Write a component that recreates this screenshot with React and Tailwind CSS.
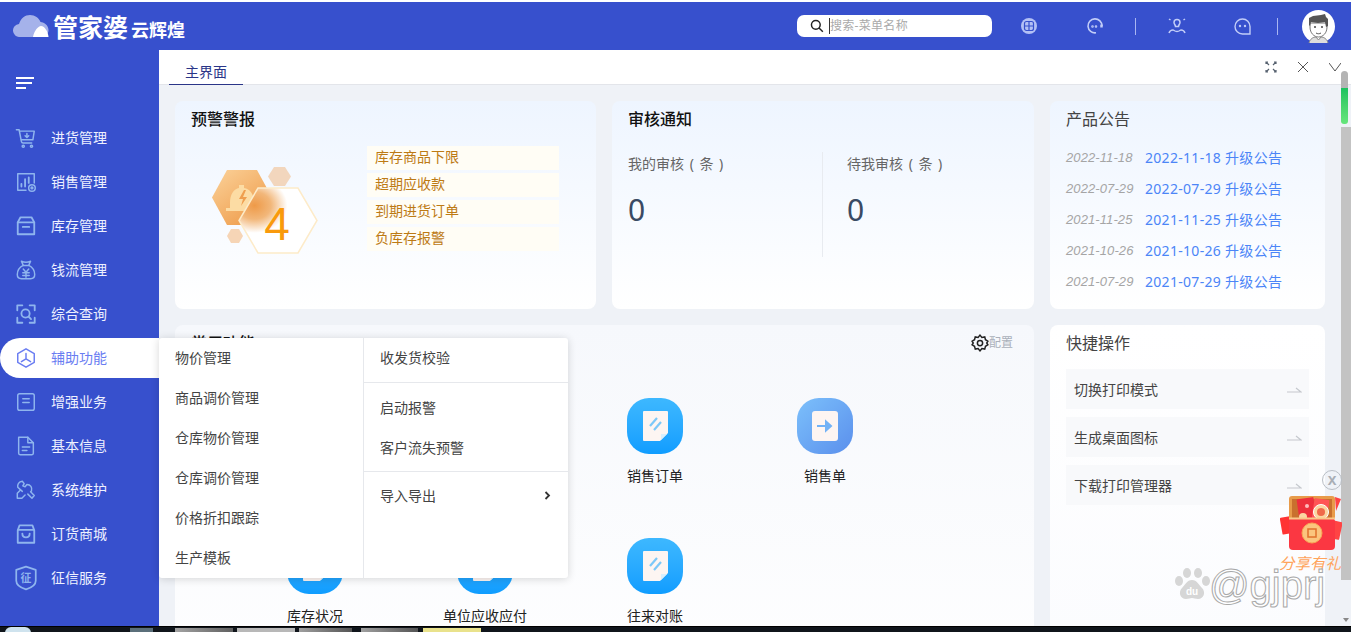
import React from "react";

const S = "#8fb5ee";
const P = ({ children, c = S, size = 22, sw = 1.6 }) => (
  <svg width={size} height={size} viewBox="0 0 24 24" fill="none" stroke={c} strokeWidth={sw} strokeLinecap="round" strokeLinejoin="round">
    {children}
  </svg>
);

const icons = {
  cart: <P><path d="M1.500 3h3l2.500 13c.2 1 .9 1.500 1.800 1.500h9.400" /><path d="M5 4.500h16l-1.500 9.500H7" /><path d="M13 7v4M11 9.500l2 2 2-2" /><circle cx="9" cy="21" r="1.200" /><circle cx="18" cy="21" r="1.200" /></P>,
  chart: <P><path d="M21 13V3H3v18h9" /><path d="M7 17v-3M11 17V9M15 13V7" strokeWidth="2" /><circle cx="18.500" cy="18.500" r="3.600" /><circle cx="18.500" cy="18.500" r="1" /></P>,
  box: <P sw={2}><path d="M3 8l3-5.500h12L21 8v13H3z" /><path d="M3 8h18M8.500 13h7" /></P>,
  money: <P><path d="M9 7L7 2.500c3 1.200 7 1.200 10 0L15 7" /><path d="M9 7C5 9 2.500 13 2.500 17c0 3 2 4.500 4.500 4.500h10c2.500 0 4.500-1.500 4.500-4.500 0-4-2.500-8-6.500-10z" /><path d="M9 11l3 3.500 3-3.500M8.500 15h7M8.500 18h7M12 14.500V20" /></P>,
  scan: <P sw={2}><path d="M2.500 8V2.500H8M16 2.500h5.500V8M21.500 16v5.500H16M8 21.500H2.500V16" /><circle cx="11.500" cy="11.500" r="4.500" /><path d="M15 15l2.500 2.500" /></P>,
  hexa: <P c="#6a7df2"><path d="M12 2l9 5.200v9.600L12 22l-9-5.200V7.200z" /><path d="M12 7v6M12 13l-5 3M12 13l5 3" /></P>,
  form: <P><rect x="3" y="3" width="18" height="18" rx="2" /><path d="M8.500 8.500h7M8.500 12.500h7" /></P>,
  doc: <P><path d="M4 2.500h10l6 6V20a1.500 1.500 0 0 1-1.500 1.500h-13A1.500 1.500 0 0 1 4 20z" /><path d="M14 2.500V8.500h6M8 13h8M8 17h5" /></P>,
  tool: <P><path d="M8 13.500L3 9c-.5-3 1-6 5-6.500L10 5 8.500 7.500 11 8.500l2-2.500c4 0 6 3 5 7l-1 1 4 4-2.500 3-4.500-4.500" /><path d="M6 12l-3.500 3.500V21h5l3.500-3.500" /></P>,
  bag: <P sw={2}><path d="M5 2.500h14l2 5.500v13.500H3V8z" /><path d="M3.500 7.500h17M8 11.500c0 5.500 8 5.500 8 0" /></P>,
  shield: <P size={26}><path d="M12 1.500l9 3v10c0 4-4 6.500-9 8-5-1.500-9-4-9-8v-10z" /><text x="12" y="15.500" fontSize="10" textAnchor="middle" fill={S} stroke="none" fontWeight="700">征</text></P>,
};

const menu = [
  ["进货管理", "cart"], ["销售管理", "chart"], ["库存管理", "box"], ["钱流管理", "money"], ["综合查询", "scan"], ["辅助功能", "hexa", true],
  ["增强业务", "form"], ["基本信息", "doc"], ["系统维护", "tool"], ["订货商城", "bag"], ["征信服务", "shield"],
];

const warn = ["库存商品下限", "超期应收款", "到期进货订单", "负库存报警"];
const notices = ["2022-11-18", "2022-07-29", "2021-11-25", "2021-10-26", "2021-07-29"];
const quick = ["切换打印模式", "生成桌面图标", "下载打印管理器"];
const left = ["物价管理", "商品调价管理", "仓库物价管理", "仓库调价管理", "价格折扣跟踪", "生产模板"];

const Tile = ({ label, arrow }) => (
  <div className="flex w-[170px] h-[140px] flex-col items-center">
    <div className={`w-[56px] h-[56px] rounded-[22px] flex items-center justify-center ${arrow ? "bg-linear-to-br from-[#7cc0fb] to-[#5b8fec]" : "bg-linear-to-b from-[#3db8ff] to-[#0f9dff]"}`}>
      {arrow ? (
        <svg width="26" height="30" viewBox="0 0 26 30">
          <rect width="26" height="30" rx="3" fill="#fdf5f2" />
          <path d="M5 15h13M14 10.500l5 4.500-5 4.500z" stroke="#72b2f6" strokeWidth="2" fill="#72b2f6" />
        </svg>
      ) : (
        <svg width="25" height="30" viewBox="0 0 25 30">
          <path d="M0 1a1 1 0 0 1 1-1h23a1 1 0 0 1 1 1v21l-8 8H1a1 1 0 0 1-1-1z" fill="#fdf5f2" />
          <path d="M7 15l7-8M11 19l7-8" stroke="#7cc8f8" strokeWidth="2.200" />
          <path d="M18 23h6l-6 6z" fill="#d9eefc" />
        </svg>
      )}
    </div>
    <div className="mt-[13px] text-[14px] leading-[18px] text-[#222]">{label}</div>
  </div>
);

const Hex = () => (
  <div className="relative w-[120px] h-[92px] ml-[9px] mt-[37px] shrink-0">
    <svg width="120" height="92" viewBox="0 0 120 92" className="block">
      <defs>
        <linearGradient id="h1" x1="0" y1="0" x2="0.8" y2="1">
          <stop offset="0" stopColor="#fbd29a" />
          <stop offset="1" stopColor="#ee9a48" />
        </linearGradient>
        <radialGradient id="h2" cx="0.2" cy="0.27" r="0.42">
          <stop offset="0" stopColor="#ee9a48" />
          <stop offset="0.5" stopColor="#f2b77a" />
          <stop offset="1" stopColor="#ffffff" />
        </radialGradient>
      </defs>
      <path d="M27 3h30l15 27.500-15 27.500H27L12 30.500z" fill="url(#h1)" />
      <path d="M74 0h11l6 9.500-6 9.500H74l-6-9.500z" fill="#f2d6bd" />
      <path d="M31 62h8l4 7-4 7h-8l-4-7z" fill="#f6d5b6" />
      <path d="M30 36c0-9 4-14 9-15v-3h5v3c6 1 10 6 10 15v5H30zM26 41h32v3H26z" fill="#fcdca4" />
      <path d="M44 23l-5 9h4l-2 7 6-9h-4l3-7z" fill="#ef9f4f" />
      <path d="M58 21h40l19 32.500-19 32.500H58L39 53.500z" fill="url(#h2)" stroke="#fdebc9" strokeWidth="1.500" />
    </svg>
    <div className="absolute left-[50px] top-[29px] w-[54px] text-center text-[46px] leading-[56px] text-[#f99a0c] font-['Liberation_Sans',sans-serif] font-light">4</div>
  </div>
);

const Avatar = () => (
  <svg width="33" height="33" viewBox="0 0 33 33">
    <circle cx="16.500" cy="16.500" r="16.500" fill="#fff" />
    <path d="M8 17c0 6 4 10 8.500 10S25 23 25 17V13H8z" fill="#fff" stroke="#777" strokeWidth="1" />
    <path d="M7 15V8l4-2 8-1 4-1 1 3 2 2v7l-2 1-1-5-7 1-7-1-1 4z" fill="#555" />
    <circle cx="13" cy="17" r="1" fill="#444" />
    <circle cx="20" cy="17" r="1" fill="#444" />
    <path d="M14 23c1.500 1 3.500 1 5 0" stroke="#555" fill="none" />
    <path d="M7 33c1-4 4-6 7-6l2.500 3 2.500-3c3 0 6 2 7 6" fill="#ddd" stroke="#888" />
  </svg>
);

const RedPacket = () => (
  <svg width="62" height="56" viewBox="0 0 62 56">
    <rect x="1" y="22" width="11" height="17" rx="1" fill="#f33" transform="rotate(-10 6 30)" />
    <rect x="50" y="26" width="11" height="18" rx="1" fill="#f44" transform="rotate(12 55 35)" />
    <path d="M55 2l6 2-5 12z" fill="#f44" />
    <rect x="9" y="1" width="46" height="24" rx="3" fill="#e89b4a" />
    <rect x="12" y="4" width="40" height="20" fill="#c9702e" />
    <rect x="18" y="3" width="17" height="23" rx="1" fill="#ee2f3c" transform="rotate(-8 27 14)" />
    <rect x="33" y="4" width="15" height="21" rx="1" fill="#f55" transform="rotate(8 40 15)" />
    <circle cx="27" cy="11" r="2" fill="#fbb" />
    <circle cx="23" cy="22" r="4" fill="#fbd6a2" />
    <circle cx="41" cy="17" r="7.500" fill="#fbd6a2" stroke="#fff" strokeWidth="1" />
    <circle cx="41" cy="17" r="4" fill="#f06a4a" />
    <rect x="9" y="23" width="46" height="32" rx="4" fill="#fb3742" />
    <path d="M9 23.500h46" stroke="#f9c78a" strokeWidth="2" />
    <circle cx="32" cy="38" r="10" fill="#fbc57e" stroke="#f8a655" strokeWidth="1" />
    <rect x="28" y="34" width="8" height="8" fill="none" stroke="#e0702d" strokeWidth="1.500" />
  </svg>
);

export default function App() {
  return (
    <div className="relative flex h-[632px] w-[1351px] flex-col overflow-hidden bg-white font-['Noto_Sans','Noto_Sans_CJK_SC',sans-serif] pt-[2px]">
      {/* header */}
      <header className="flex h-[48px] shrink-0 items-center bg-[#3750cd]">
        <div className="flex w-[797px] items-center pl-[13px]">
          <svg width="36" height="22" viewBox="0 0 36 22">
            <path d="M7 22a6.500 6.500 0 0 1-1-13C8 3 12 0 17 0c5 0 9 3 10.500 7 4 .5 8 3.500 8 8 0 4-3 7-7 7z" fill="#a5b2ea" />
            <path d="M20 22c1-6 5-11 8-11 4 0 7 6 7.500 11z" fill="#fff" />
          </svg>
          <span className="ml-[4px] text-[25px] leading-[32px] font-bold text-white font-['Noto_Sans_CJK_SC',sans-serif]">管家婆</span>
          <span className="ml-[3px] mt-[5px] text-[18px] leading-[24px] font-bold text-white font-['Noto_Sans_CJK_SC',sans-serif]">云辉煌</span>
        </div>
        <div className="flex h-[22px] w-[195px] items-center rounded-[7px] bg-white pl-[13px]">
          <svg width="14" height="14" viewBox="0 0 24 24" fill="none" stroke="#222" strokeWidth="2.500">
            <circle cx="10" cy="10" r="7.500" />
            <path d="M15.500 15.500L22 22" />
          </svg>
          <span className="ml-[5px] h-[16px] w-px bg-[#333]" />
          <span className="text-[12px] tracking-[0.3px] leading-[18px] text-[#aaa]">搜索-菜单名称</span>
        </div>
        <div className="ml-[29px] flex items-center">
          <svg width="16" height="16" viewBox="0 0 16 16" fill="none">
            <circle cx="8" cy="8" r="8" fill="#b3c0f5" />
            <rect x="3.500" y="3.500" width="9" height="9" rx="2" stroke="#3750cd" strokeWidth="1.200" />
            <path d="M8 3.500v9M3.500 8h9" stroke="#3750cd" strokeWidth="1.200" />
          </svg>
          <svg className="ml-[49px]" width="18" height="18" viewBox="0 0 18 18" fill="none" stroke="#c2cdf8" strokeWidth="1.600">
            <path d="M16 9A7 7 0 1 0 10 15.800" />
            <path d="M15.500 7.500v3" strokeWidth="2.500" />
            <circle cx="6.500" cy="9.500" r="0.500" />
            <circle cx="10" cy="9.500" r="0.500" />
          </svg>
          <span className="ml-[31px] h-[17px] w-[1px] bg-[#a9b6f2]" />
          <svg className="ml-[32px]" width="18" height="18" viewBox="0 0 18 18" fill="none" stroke="#c2cdf8" strokeWidth="1.500">
            <path d="M6 5.500a3 3 0 0 1 6 0c0 1.500-1.500 2.500-1.500 4h-3C7.500 8 6 7 6 5.500z" />
            <path d="M1 2l1.500 1M17 2l-1.500 1M1 16c1-3 3-3 4-3 1 0 1.500 1.500 4 1.500S12 13 13 13c1 0 3 0 4 3" />
          </svg>
          <svg className="ml-[48px]" width="17" height="17" viewBox="0 0 17 17" fill="none" stroke="#c2cdf8" strokeWidth="1.400">
            <path d="M16 8.500A7.500 7.500 0 1 0 8.500 16H16z" />
            <circle cx="6" cy="8" r="0.500" />
            <circle cx="11" cy="8" r="0.500" />
          </svg>
          <span className="ml-[26px] h-[17px] w-[1px] bg-[#a9b6f2]" />
          <div className="ml-[24px]"><Avatar /></div>
        </div>
      </header>

      <div className="flex min-h-0 flex-1">
        {/* sidebar */}
        <aside className="w-[159px] shrink-0 bg-[#3750cd]">
          <div className="flex h-[66px] flex-col gap-[3px] pl-[16px] pt-[27px]">
            <span className="h-[2px] w-[18px] bg-white" />
            <span className="h-[2px] w-[16px] bg-white" />
            <span className="h-[2px] w-[10px] bg-white" />
          </div>
          {menu.map(([label, icon, active]) => (
            <div key={label} className={active ? "my-[2px] flex h-[40px] items-center rounded-l-[20px] bg-white" : "flex h-[44px] items-center"}>
              <div className="flex w-[51px] justify-center">{icons[icon]}</div>
              <span className={`text-[14px] leading-[20px] ${active ? "text-[#6a7df2]" : "text-[#eef1ff]"}`}>{label}</span>
            </div>
          ))}
        </aside>

        {/* main */}
        <main className="flex min-w-0 flex-1 flex-col bg-[#eff2f7]">
          <div className="flex h-[35px] shrink-0 border-b border-[#e3e5ea] bg-white pl-[10px]">
            <div className="flex h-[35px] w-[74px] items-center justify-center border-b border-[#2a3588] pt-[9px] text-[14px] leading-[18px] text-[#2a3588]">主界面</div>
            <div className="ml-auto flex items-center pr-[10px] gap-[20px]">
              <svg width="12" height="12" viewBox="0 0 12 12" fill="none" stroke="#55606e" strokeWidth="1.200">
                <path d="M1 1l3 3M11 1L8 4M1 11l3-3M11 11L8 8M3 1H1v2M9 1h2v2M1 9v2h2M11 9v2H9" />
              </svg>
              <svg width="12" height="12" viewBox="0 0 12 12" stroke="#555" strokeWidth="1"><path d="M1 1l10 10M11 1L1 11" /></svg>
              <svg width="12" height="8" viewBox="0 0 12 8" fill="none" stroke="#555" strokeWidth="1"><path d="M0 0l6 8 6-8" /></svg>
            </div>
          </div>

          <div className="flex min-h-0 flex-1">
            <div className="min-w-0 flex-1 overflow-hidden pl-[16px] pt-[16px]">
              <div className="flex h-[208px] gap-[16px]">
                <section className="w-[421px] shrink-0 rounded-[8px] bg-linear-to-b from-[#eef5ff] to-white px-[16px]">
                  <h2 className="pt-[7px] text-[16px] leading-[22px] font-medium text-[#111]">预警警报</h2>
                  <div className="flex">
                    <Hex />
                    <div className="ml-[47px] mt-[16px] flex w-[192px] flex-col gap-[3px]">
                      {warn.map((w) => (
                        <div key={w} className="h-[24px] bg-[#fffdf5] pl-[8px] text-[14px] leading-[22px] text-[#bd7a14]">{w}</div>
                      ))}
                    </div>
                  </div>
                </section>
                <section className="w-[422px] shrink-0 rounded-[8px] bg-linear-to-b from-[#eef5ff] to-white px-[16px]">
                  <h2 className="pt-[7px] text-[16px] leading-[22px] font-medium text-[#111]">审核通知</h2>
                  <div className="mt-[22px] flex">
                    <div className="h-[105px] w-[195px] border-r border-[#e8ebf0]">
                      <div className="pt-[2px] text-[14px] leading-[20px] text-[#666] [word-spacing:2px]">我的审核 ( 条 )</div>
                      <div className="mt-[18px] text-[30px] leading-[36px] text-[#3a4a64]">0</div>
                    </div>
                    <div className="pl-[24px]">
                      <div className="pt-[2px] text-[14px] leading-[20px] text-[#666] [word-spacing:2px]">待我审核 ( 条 )</div>
                      <div className="mt-[18px] text-[30px] leading-[36px] text-[#3a4a64]">0</div>
                    </div>
                  </div>
                </section>
                <section className="w-[275px] shrink-0 rounded-[8px] bg-linear-to-b from-[#eef5ff] to-white px-[16px]">
                  <h2 className="pt-[7px] text-[16px] leading-[22px] text-[#444]">产品公告</h2>
                  <div className="mt-[12px]">
                    {notices.map((d) => (
                      <div key={d} className="flex h-[31px] items-center">
                        <span className="w-[79px] text-[13px] italic tracking-[0.1px] text-[#a5a5a5] font-['Liberation_Sans',sans-serif]">{d}</span>
                        <span className="text-[14px] tracking-[0.3px] leading-[20px] text-[#4c85f7]">{d} 升级公告</span>
                      </div>
                    ))}
                  </div>
                </section>
              </div>

              <div className="mt-[16px] flex h-[400px] gap-[16px]">
                <section className="relative w-[859px] shrink-0 rounded-[8px] bg-linear-to-b from-[#f6f8fc] to-white px-[16px]">
                  <div className="flex items-center pt-[7px]">
                    <h2 className="text-[16px] leading-[22px] font-medium text-[#111]">常用功能</h2>
                    <div className="ml-auto mr-[5px] flex items-center">
                      <svg width="18" height="18" viewBox="0 0 24 24" fill="none" stroke="#222" strokeWidth="2">
                        <circle cx="12" cy="12" r="3.500" />
                        <path d="M12 1.500l2.500 3 3.800-.6 1 3.700 3.200 2-1.500 2.400 1.500 2.400-3.200 2-1 3.700-3.800-.6-2.500 3-2.500-3-3.800.6-1-3.700-3.200-2 1.500-2.400-1.500-2.400 3.200-2 1-3.700 3.800.6z" />
                      </svg>
                      <span className="text-[12px] leading-[18px] text-[#aab0ba]">配置</span>
                    </div>
                  </div>
                  <div className="mt-[44px] ml-[39px] flex flex-wrap">
                    <Tile label="" />
                    <Tile label="" />
                    <Tile label="销售订单" />
                    <Tile label="销售单" arrow />
                    <Tile label="库存状况" />
                    <Tile label="单位应收应付" />
                    <Tile label="往来对账" />
                  </div>
                </section>
                <section className="w-[275px] shrink-0 rounded-[8px] bg-linear-to-b from-white to-[#fafbfe] px-[16px]">
                  <h2 className="pt-[7px] text-[16px] leading-[22px] text-[#444]">快捷操作</h2>
                  <div className="mt-[15px] flex flex-col gap-[8px]">
                    {quick.map((q) => (
                      <div key={q} className="flex h-[40px] items-center bg-[#f8f9fb] pl-[8px] pr-[7px] pt-[1px] text-[14px] leading-[20px] text-[#444]">
                        {q}
                        <svg className="ml-auto" width="15" height="6" viewBox="0 0 15 6" fill="none" stroke="#c5c8ce" strokeWidth="1.200"><path d="M0 5h14L9 1" /></svg>
                      </div>
                    ))}
                  </div>
                </section>
              </div>
            </div>
            {/* scrollbar */}
            <div className="w-[26px] shrink-0 relative">
              <div className="absolute left-[16px] top-[42px] h-[453px] w-[10px] bg-[#c3c3c3]" />
              <div className="absolute left-[18px] bottom-[4px] h-0 w-0 border-x-[3px] border-t-[4px] border-x-transparent border-t-[#888]" />
            </div>
          </div>
        </main>
      </div>

      {/* taskbar */}
      <footer className="flex h-[6px] shrink-0 items-start bg-[#10151b] border-t border-black">
        <div className="ml-[5px] h-[6px] w-[26px] rounded-t-full bg-[#cfe3ee]" />
        <div className="ml-[99px] mt-[1px] h-[5px] w-[23px] bg-[#5b6f7a]" />
        <div className="ml-[22px] mt-[1px] h-[5px] w-[58px] bg-linear-to-r from-[#a4a4a4] to-[#606060]" />
        <div className="ml-[4px] mt-[1px] h-[5px] w-[58px] bg-[#b8b8b8]" />
        <div className="ml-[4px] mt-[1px] h-[5px] w-[53px] bg-linear-to-r from-[#a0a0a0] to-[#555]" />
        <div className="ml-[9px] mt-[1px] h-[5px] w-[57px] bg-linear-to-r from-[#a0a0a0] to-[#555]" />
        <div className="ml-[5px] mt-[1px] h-[5px] w-[58px] bg-[#e9e28c]" />
      </footer>

      {/* overlays */}
      <div className="absolute left-[1341px] top-[71px] h-[20px] w-[7px] rounded-t-[4px] bg-[#b4b4b4]" />
      <div className="absolute left-[1341px] top-[88px] h-[36px] w-[7px] rounded-b-[3px] bg-linear-to-b from-[#19c25f] to-[#66e67c]" />

      <div className="absolute left-[159px] top-[338px] flex h-[240px] w-[409px] rounded-[3px] bg-white shadow-[0_1px_8px_rgba(0,0,0,0.16)] text-[14px] text-[#444]">
        <div className="w-[205px] border-r border-[#e6e8ec] pl-[16px]">
          {left.map((l) => (
            <div key={l} className="flex h-[40px] items-center leading-[20px]">{l}</div>
          ))}
        </div>
        <div className="flex-1">
          <div className="flex h-[45px] items-center border-b border-[#e6e8ec] pb-[5px] pl-[16px]">收发货校验</div>
          <div className="h-[89px] border-b border-[#e6e8ec] pl-[16px]">
            <div className="flex h-[44px] items-center pt-[4px]">启动报警</div>
            <div className="flex h-[40px] items-center">客户流失预警</div>
          </div>
          <div className="flex h-[47px] items-center pl-[16px] pr-[17px]">
            导入导出
            <svg className="ml-auto" width="7" height="9" viewBox="0 0 7 9" fill="none" stroke="#333" strokeWidth="1.800"><path d="M1.500 1l3.500 3.500L1.500 8" /></svg>
          </div>
        </div>
      </div>

      <div className="absolute left-[1322px] top-[470px] flex h-[20px] w-[20px] items-center justify-center rounded-full border border-[#b9bec5] text-[13px] font-bold leading-none text-[#a9aeb5]">X</div>
      <div className="absolute left-[1280px] top-[495px]"><RedPacket /></div>
      <div className="absolute left-[1279px] top-[553px] text-[15.500px] italic leading-[20px] text-[#ffa45c] whitespace-nowrap">分享有礼</div>

      <div className="absolute left-[1174px] top-[562px] flex items-center">
        <svg width="36" height="36" viewBox="0 0 36 36" fill="#d6d6d6">
          <ellipse cx="5" cy="14" rx="4" ry="5" />
          <ellipse cx="13" cy="6" rx="4" ry="5" />
          <ellipse cx="24" cy="6" rx="4" ry="5" />
          <ellipse cx="32" cy="14" rx="4" ry="5" />
          <path d="M18 13c5 0 7 5 10 8 4 4 2 11-4 11-3 0-4-1-6-1s-3 1-6 1c-6 0-8-7-4-11 3-3 5-8 10-8z" />
          <text x="18" y="28" fontSize="10" textAnchor="middle" fill="#fff" fontWeight="700" fontFamily="Liberation Sans">du</text>
        </svg>
        <span className="ml-[-1px] text-[40px] leading-[46px] text-white/80 [-webkit-text-stroke:1px_#a8a8a8] font-['Liberation_Sans',sans-serif]">@gjprj</span>
      </div>
    </div>
  );
}
